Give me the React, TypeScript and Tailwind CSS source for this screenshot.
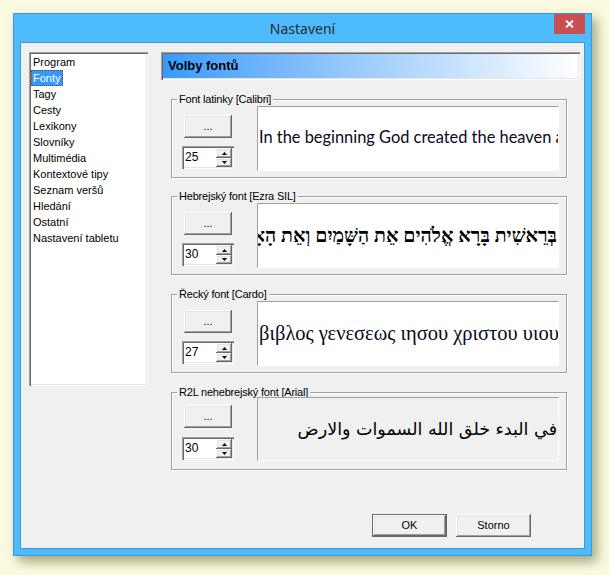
import React from "react";

const raised =
  "shadow-[inset_-1px_-1px_0_#696969,inset_1px_1px_0_#ffffff,inset_-2px_-2px_0_#a0a0a0,inset_2px_2px_0_#e3e3e3]";
const sunken =
  "shadow-[inset_1px_1px_0_#a0a0a0,inset_2px_2px_0_#696969,inset_-1px_-1px_0_#ffffff,inset_-2px_-2px_0_#e3e3e3]";

function Spinner({ value }: { value: string }) {
  return (
    <div className={`flex w-[52px] h-[23px] p-[2px] bg-white ${sunken}`}>
      <div className="flex-1 bg-white pl-[1px] text-[12px] leading-[19px] text-black">{value}</div>
      <div className="flex w-[16px] flex-col bg-[#f0f0f0]">
        <div className={`flex h-[10px] items-center justify-center bg-[#f0f0f0] ${raised}`}>
          <svg width="5" height="3" viewBox="0 0 5 3">
            <polygon points="2.5,0 5,3 0,3" fill="#000" />
          </svg>
        </div>
        <div className={`flex h-[9px] items-center justify-center bg-[#f0f0f0] ${raised}`}>
          <svg width="5" height="3" viewBox="0 0 5 3">
            <polygon points="0,0 5,0 2.5,3" fill="#000" />
          </svg>
        </div>
      </div>
    </div>
  );
}

function Group({
  label,
  size,
  compact,
  children,
  gray,
}: {
  label: string;
  size: string;
  compact?: boolean;
  gray?: boolean;
  children: React.ReactNode;
}) {
  return (
    <div
      className={`relative ml-[10px] w-[396px] border border-[#a0a0a0] shadow-[inset_1px_1px_0_#ffffff,1px_1px_0_#ffffff] ${
        compact ? "h-[78px]" : "h-[79px]"
      }`}
    >
      <div className="absolute left-[5px] top-[-7px] bg-[#f0f0f0] px-[2px] text-[11px] leading-[13px] tracking-[-0.2px] text-black">
        {label}
      </div>
      <div className="flex items-start pl-[10px]">
        <div className="flex w-[52px] flex-col">
          <div
            className={`ml-[2px] flex h-[23px] w-[48px] items-center justify-center bg-[#f0f0f0] pb-[1px] text-[11px] text-black ${raised} ${
              compact ? "mt-[12px]" : "mt-[15px]"
            }`}
          >
            ...
          </div>
          <div className={compact ? "mt-[9px]" : "mt-[8px]"}>
            <Spinner value={size} />
          </div>
        </div>
        <div
          className={`relative ml-[23px] w-[302px] overflow-hidden border-t border-l border-t-[#a0a0a0] border-l-[#a0a0a0] border-r border-b border-r-white border-b-white ${
            gray ? "bg-[#f0f0f0]" : "bg-white"
          } ${compact ? "mt-[4px] h-[64px]" : "mt-[6px] h-[65px]"}`}
        >
          {children}
        </div>
      </div>
    </div>
  );
}

const items = [
  "Program",
  "Fonty",
  "Tagy",
  "Cesty",
  "Lexikony",
  "Slovníky",
  "Multimédia",
  "Kontextové tipy",
  "Seznam veršů",
  "Hledání",
  "Ostatní",
  "Nastavení tabletu",
];

export default function App() {
  return (
    <div className="h-[575px] w-[609px] bg-[#fafae0] pl-[13px] pt-[13px] font-['Liberation_Sans',Arial,sans-serif]">
      <div className="flex h-[543px] w-[579px] flex-col border border-[#3a9ad9] bg-[#4ebbfd] shadow-[5px_6px_10px_rgba(90,90,40,0.5)]">
        {/* title bar */}
        <div className="relative flex h-[28px] items-center justify-center">
          <span className="font-['Noto_Sans',sans-serif] text-[14px] text-[#2a2a2a]">Nastavení</span>
          <div className="absolute right-[6px] top-0 flex h-[20px] w-[31px] items-center justify-center bg-[#c75050]">
            <svg width="9" height="8" viewBox="0 0 9 8">
              <path d="M1 0.5 L8 7.5 M8 0.5 L1 7.5" stroke="#ffffff" strokeWidth="1.8" />
            </svg>
          </div>
        </div>
        {/* client */}
        <div className="mx-[6px] mb-[6px] flex flex-1 flex-col border border-[#3a9ad9] bg-[#f0f0f0]">
          <div className="flex pl-[8px] pt-[9px]">
            {/* list */}
            <div className={`h-[334px] w-[119px] bg-white p-[2px] ${sunken}`}>
              {items.map((it) => (
                <div key={it} className="h-[16px] text-[11px] leading-[16px] text-black">
                  {it === "Fonty" ? (
                    <span className="inline-block h-[16px] border border-dotted border-[#7a4a10] bg-[#3399ff] px-[1px] leading-[14px] text-white">
                      {it}
                    </span>
                  ) : (
                    <span className="pl-[2px]">{it}</span>
                  )}
                </div>
              ))}
            </div>
            {/* right column */}
            <div className="ml-[13px] flex w-[419px] flex-col">
              <div
                className={`flex h-[28px] items-center bg-linear-to-r from-[#3399ff] to-white pl-[7px] text-[13px] font-bold text-black ${sunken}`}
              >
                Volby fontů
              </div>
              <div className="mt-[19px]">
                <Group label="Font latinky [Calibri]" size="25">
                  <div className="absolute inset-0 flex items-center whitespace-nowrap pb-[2px] pl-[1px] font-['Lato',sans-serif] text-[16.4px] text-[#0a0a1a]">
                    In the beginning God created the heaven and the earth.
                  </div>
                </Group>
              </div>
              <div className="mt-[18px]">
                <Group label="Hebrejský font [Ezra SIL]" size="30">
                  <div
                    dir="rtl"
                    className="absolute inset-0 flex items-center whitespace-nowrap pr-[1px] font-['Liberation_Serif','DejaVu_Sans',serif] text-[19.5px] font-bold text-black"
                  >
                    בְּרֵאשִׁית בָּרָא אֱלֹהִים אֵת הַשָּׁמַיִם וְאֵת הָאָרֶץ
                  </div>
                </Group>
              </div>
              <div className="mt-[19px]">
                <Group label="Řecký font [Cardo]" size="27">
                  <div className="absolute inset-0 flex items-center whitespace-nowrap pl-[1px] font-['Liberation_Serif','DejaVu_Serif',serif] text-[20.5px] text-[#0a0a1a]">
                    βιβλος γενεσεως ιησου χριστου υιου δαυιδ υιου αβρααμ
                  </div>
                </Group>
              </div>
              <div className="mt-[19px]">
                <Group label="R2L nehebrejský font [Arial]" size="30" compact gray>
                  <div
                    dir="rtl"
                    className="absolute inset-0 flex items-center whitespace-nowrap pr-[1px] font-['DejaVu_Sans',sans-serif] text-[17.5px] text-black"
                  >
                    في البدء خلق الله السموات والارض
                  </div>
                </Group>
              </div>
            </div>
          </div>
          {/* footer */}
          <div className="mt-auto flex justify-end gap-[9px] pb-[11px] pr-[53px]">
            <div
              className={`flex h-[23px] w-[75px] items-center justify-center border border-[#696969] bg-[#f0f0f0] text-[11px] text-black ${raised}`}
            >
              OK
            </div>
            <div
              className={`flex h-[23px] w-[75px] items-center justify-center bg-[#f0f0f0] text-[11px] text-black ${raised}`}
            >
              Storno
            </div>
          </div>
        </div>
      </div>
    </div>
  );
}
